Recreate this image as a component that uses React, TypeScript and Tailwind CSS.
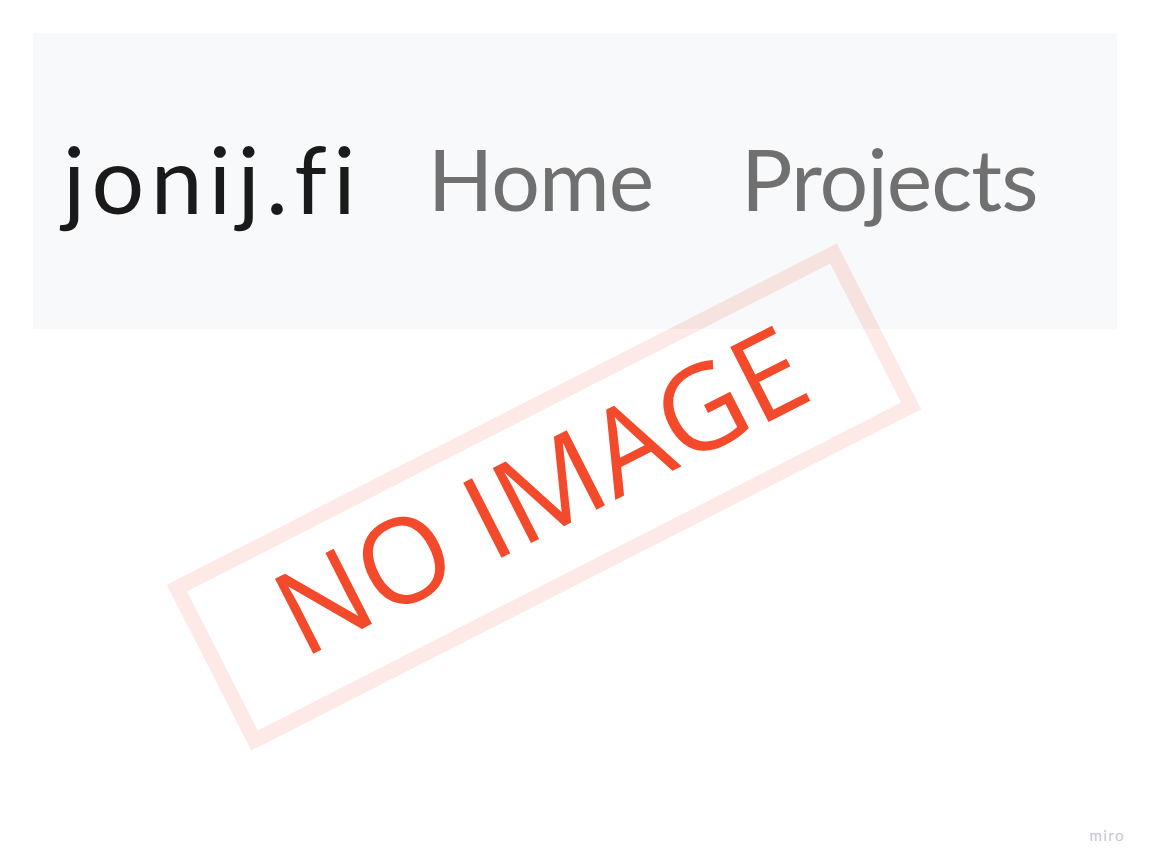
import React from 'react';

const NavLink = ({ children }: { children: React.ReactNode }) => (
  <a href="#" className="text-[#707071] text-[86px] tracking-[-1px] leading-none">
    {children}
  </a>
);

const App = () => {
  return (
    <div className="relative w-[1150px] h-[868px] overflow-hidden bg-white font-['Lato',sans-serif] flex flex-col">
      {/* Navbar */}
      <div className="px-[33px] pt-[33px]">
        <nav className="h-[296px] bg-[#f8f9fa] flex items-center pl-[30px] pb-[6px]">
          <a href="#" className="text-[#1a1a1a] text-[93px] tracking-[6.3px] leading-none mr-[66px]">
            jonij.fi
          </a>
          <div className="flex items-center gap-[88px]">
            <NavLink>Home</NavLink>
            <NavLink>Projects</NavLink>
          </div>
        </nav>
      </div>

      <div className="flex-1" />

      {/* Footer watermark */}
      <div className="flex justify-end pr-[25px] pb-[22px]">
        <span className="text-[15px] text-[#c4c4d4] tracking-[1.5px]">miro</span>
      </div>

      {/* No image stamp */}
      <div className="absolute left-[168px] top-[404px] w-[752px] h-[186px] -rotate-[27deg] border-[15px] border-[#f24a2a]/12 flex items-center justify-center">
        <span className="font-['Open_Sans',sans-serif] text-[118px] leading-none text-[#f24a2a] -mt-[20px] whitespace-nowrap">
          NO IMAGE
        </span>
      </div>
    </div>
  );
};

export default App;
